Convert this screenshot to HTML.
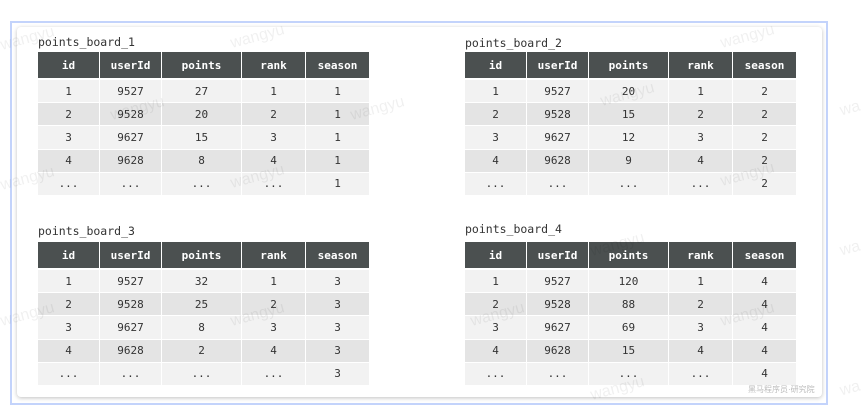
<!DOCTYPE html>
<html><head><meta charset="utf-8"><style>
*{margin:0;padding:0;box-sizing:border-box}
body{width:861px;height:414px;background:#fff;position:relative;overflow:hidden;font-family:"DejaVu Sans Mono","Liberation Mono",monospace}
.outer{position:absolute;left:10px;top:21px;width:818px;height:384px;border:2px solid #c3d3fb}
.card{position:absolute;left:17px;top:27px;width:805px;height:370px;background:#fff;border-radius:4px;box-shadow:0 1px 4px rgba(0,0,0,.25)}
.t{position:absolute;font-size:11.5px;color:#333}
.g{position:absolute;display:grid;grid-template-columns:61px 61px 79px 63px 63px;grid-template-rows:27px repeat(5,22.2px);gap:1px;row-gap:1px}
.g div{display:flex;align-items:center;justify-content:center;font-size:11px;color:#333}
.g .h{background:#4b5050;color:#fff;font-weight:bold;margin-bottom:1px}
.g .a{background:#f2f2f2}
.g .b{background:#e4e4e4}
.wm{position:absolute;color:rgba(0,0,0,.06);font-family:"Liberation Sans",sans-serif;font-size:16px;transform:rotate(-15deg)}
</style></head><body>
<div class="outer"></div>
<div class="card"></div>

<div class="t" style="left:38px;top:35px">points_board_1</div>
<div class="g" style="left:38px;top:52px">
<div class="h">id</div><div class="h">userId</div><div class="h">points</div><div class="h">rank</div><div class="h">season</div>
<div class="a">1</div><div class="a">9527</div><div class="a">27</div><div class="a">1</div><div class="a">1</div>
<div class="b">2</div><div class="b">9528</div><div class="b">20</div><div class="b">2</div><div class="b">1</div>
<div class="a">3</div><div class="a">9627</div><div class="a">15</div><div class="a">3</div><div class="a">1</div>
<div class="b">4</div><div class="b">9628</div><div class="b">8</div><div class="b">4</div><div class="b">1</div>
<div class="a">...</div><div class="a">...</div><div class="a">...</div><div class="a">...</div><div class="a">1</div>
</div>

<div class="t" style="left:465px;top:36px">points_board_2</div>
<div class="g" style="left:465px;top:52px">
<div class="h">id</div><div class="h">userId</div><div class="h">points</div><div class="h">rank</div><div class="h">season</div>
<div class="a">1</div><div class="a">9527</div><div class="a">20</div><div class="a">1</div><div class="a">2</div>
<div class="b">2</div><div class="b">9528</div><div class="b">15</div><div class="b">2</div><div class="b">2</div>
<div class="a">3</div><div class="a">9627</div><div class="a">12</div><div class="a">3</div><div class="a">2</div>
<div class="b">4</div><div class="b">9628</div><div class="b">9</div><div class="b">4</div><div class="b">2</div>
<div class="a">...</div><div class="a">...</div><div class="a">...</div><div class="a">...</div><div class="a">2</div>
</div>

<div class="t" style="left:38px;top:224px">points_board_3</div>
<div class="g" style="left:38px;top:242px">
<div class="h">id</div><div class="h">userId</div><div class="h">points</div><div class="h">rank</div><div class="h">season</div>
<div class="a">1</div><div class="a">9527</div><div class="a">32</div><div class="a">1</div><div class="a">3</div>
<div class="b">2</div><div class="b">9528</div><div class="b">25</div><div class="b">2</div><div class="b">3</div>
<div class="a">3</div><div class="a">9627</div><div class="a">8</div><div class="a">3</div><div class="a">3</div>
<div class="b">4</div><div class="b">9628</div><div class="b">2</div><div class="b">4</div><div class="b">3</div>
<div class="a">...</div><div class="a">...</div><div class="a">...</div><div class="a">...</div><div class="a">3</div>
</div>

<div class="t" style="left:465px;top:222px">points_board_4</div>
<div class="g" style="left:465px;top:242px">
<div class="h">id</div><div class="h">userId</div><div class="h">points</div><div class="h">rank</div><div class="h">season</div>
<div class="a">1</div><div class="a">9527</div><div class="a">120</div><div class="a">1</div><div class="a">4</div>
<div class="b">2</div><div class="b">9528</div><div class="b">88</div><div class="b">2</div><div class="b">4</div>
<div class="a">3</div><div class="a">9627</div><div class="a">69</div><div class="a">3</div><div class="a">4</div>
<div class="b">4</div><div class="b">9628</div><div class="b">15</div><div class="b">4</div><div class="b">4</div>
<div class="a">...</div><div class="a">...</div><div class="a">...</div><div class="a">...</div><div class="a">4</div>
</div>

<div class="wm" style="left:230px;top:28px">wangyu</div>
<div class="wm" style="left:110px;top:100px">wangyu</div>
<div class="wm" style="left:350px;top:100px">wangyu</div>
<div class="wm" style="left:230px;top:168px">wangyu</div>
<div class="wm" style="left:0px;top:30px">wangyu</div>
<div class="wm" style="left:0px;top:170px">wangyu</div>
<div class="wm" style="left:600px;top:86px">wangyu</div>
<div class="wm" style="left:720px;top:28px">wangyu</div>
<div class="wm" style="left:720px;top:166px">wangyu</div>
<div class="wm" style="left:840px;top:100px">wa</div>
<div class="wm" style="left:590px;top:236px">wangyu</div>
<div class="wm" style="left:470px;top:306px">wangyu</div>
<div class="wm" style="left:720px;top:306px">wangyu</div>
<div class="wm" style="left:230px;top:306px">wangyu</div>
<div class="wm" style="left:0px;top:306px">wangyu</div>
<div class="wm" style="left:590px;top:380px">wangyu</div>
<div class="wm" style="left:840px;top:240px">wa</div>
<div class="wm" style="left:840px;top:380px">wa</div>
<div style="position:absolute;left:748px;top:384px;font-size:8px;color:#bbb;font-family:'Liberation Sans','Noto Sans CJK SC',sans-serif">黑马程序员·研究院</div>
</body></html>
